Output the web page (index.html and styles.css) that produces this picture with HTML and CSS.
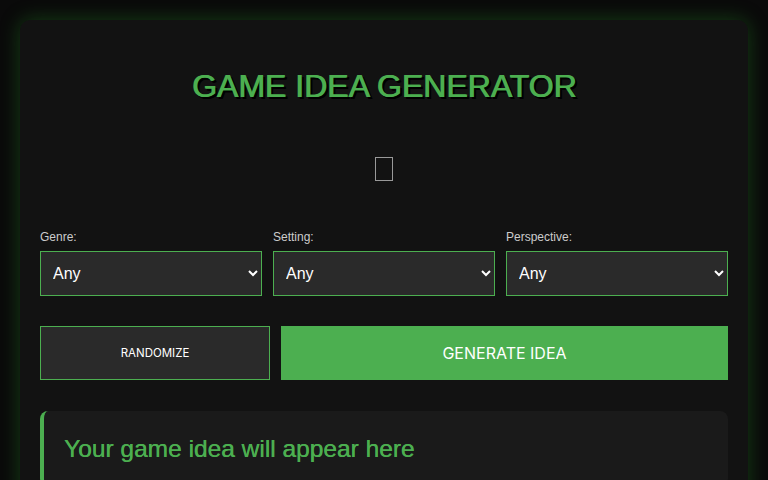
FILE: index.html
```html
<!DOCTYPE html>
<html lang="en">
<head>
    <meta charset="UTF-8">
    <meta name="viewport" content="width=device-width, initial-scale=1.0">
    <title>Game Idea Generator</title>
    <link rel="stylesheet" href="styles.css">
</head>
<body>

<div class="container">
    <h1>GAME IDEA GENERATOR</h1>

    <div class="icon"><span class="tofu"></span></div>

    <div class="filters">
        <div class="filter">
            <label for="genre">Genre:</label>
            <select id="genre"><option>Any</option></select>
        </div>
        <div class="filter">
            <label for="setting">Setting:</label>
            <select id="setting"><option>Any</option></select>
        </div>
        <div class="filter">
            <label for="perspective">Perspective:</label>
            <select id="perspective"><option>Any</option></select>
        </div>
    </div>

    <div class="actions">
        <button class="btn-random">RANDOMIZE</button>
        <button class="btn-generate">GENERATE IDEA</button>
    </div>

    <div class="result">
        <h2>Your game idea will appear here</h2>
    </div>
</div>

</body>
</html>
```

FILE: styles.css
```css
body {
    font-family: "Liberation Sans", Arial, sans-serif;
    margin: 0;
    padding: 20px;
    background-color: #0a0a0a;
    color: #fff;
}
.container {
    background-color: #121212;
    padding: 44px 20px 20px;
    border-radius: 10px;
    box-shadow: 0 0 20px rgba(40, 160, 40, 0.35);
    min-height: 600px;
}
h1 {
    font-family: "Liberation Sans", Arial, sans-serif;
    font-size: 32px;
    font-weight: normal;
    text-align: center;
    color: #4caf50;
    margin: 0;
    line-height: 44px;
    text-shadow: 1px 0 0 #4caf50, 2px 2px 0 #000, 3px 2px 0 #000;
}
.icon {
    display: flex;
    justify-content: center;
    padding: 49px 0 0;
    height: 60px;
}
.tofu {
    display: block;
    width: 18px;
    height: 24px;
    border: 1px solid #999;
    box-sizing: border-box;
}
.filters {
    display: grid;
    grid-template-columns: 1fr 1fr 1fr;
    gap: 11px;
    margin-top: 13px;
}
.filter label {
    display: block;
    font-size: 12px;
    color: #ccc;
    margin-bottom: 7px;
}
select {
    width: 100%;
    height: 45px;
    padding: 0 8px;
    background-color: #2a2a2a;
    color: #fff;
    border: 1px solid #4caf50;
    border-radius: 0;
    font-family: "Liberation Sans", Arial, sans-serif;
    font-size: 16px;
}
.actions {
    display: grid;
    grid-template-columns: 230px 1fr;
    gap: 11px;
    margin-top: 30px;
}
button {
    height: 54px;
    border: none;
    cursor: pointer;
    font-family: Inter, sans-serif;
}
.btn-random {
    background-color: #2a2a2a;
    border: 1px solid #4caf50;
    color: #fff;
    font-size: 11.5px;
}
.btn-generate {
    background-color: #4caf50;
    color: #fff;
    font-size: 16px;
}
.result {
    margin-top: 31px;
    background-color: #1a1a1a;
    border-left: 4px solid #4caf50;
    border-radius: 8px;
    padding: 24px 20px;
}
.result h2 {
    margin: 0;
    font-size: 24.5px;
    font-weight: normal;
    color: #4caf50;
    text-shadow: 0.3px 0 0 #4caf50;
}
```
